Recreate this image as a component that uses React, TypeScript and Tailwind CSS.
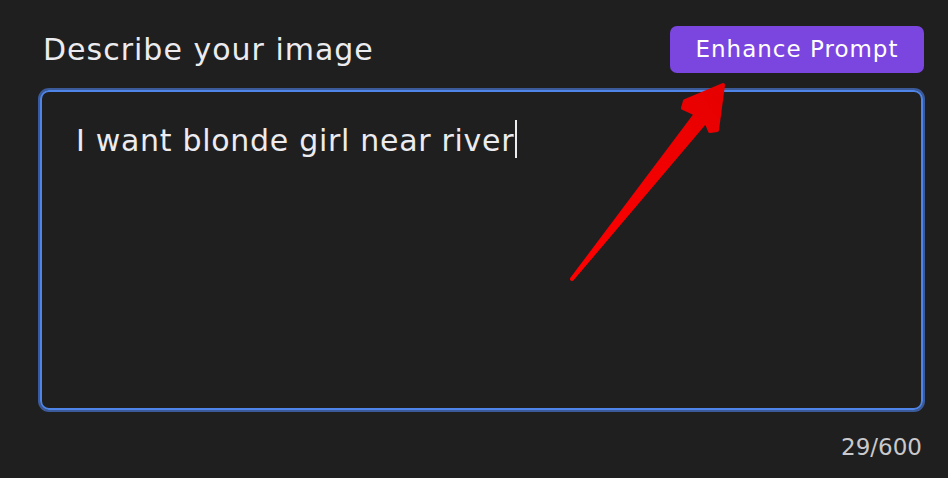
const font = { fontFamily: '"DejaVu Sans", "Open Sans", sans-serif' };

function Arrow() {
  return (
    <svg
      className="absolute left-0 top-0 pointer-events-none"
      width="948"
      height="478"
      viewBox="0 0 948 478"
    >
      <defs>
        <linearGradient id="ar" x1="0" y1="1" x2="1" y2="0">
          <stop offset="0" stopColor="#ff0000" />
          <stop offset="1" stopColor="#e60000" />
        </linearGradient>
      </defs>
      <path
        d="M572 279 L696 114 L683 108 L685 101 L723 85 L717 130 L710 131 L706 121 Z"
        fill="url(#ar)"
        stroke="url(#ar)"
        strokeWidth="4"
        strokeLinejoin="round"
      />
    </svg>
  );
}

export default function App() {
  return (
    <div
      className="relative w-[948px] h-[478px] bg-[#1f1f1f] pl-[40px] pr-[25px] pt-[26px] overflow-hidden"
      style={font}
    >
      <div className="flex items-center justify-between h-[47px]">
        <h1 className="ml-[3px] text-[30px] leading-[36px] tracking-[1px] text-[#ececf0]">Describe your image</h1>
        <button className="w-[254px] h-[47px] mr-[-1px] rounded-[7px] bg-[#7b46e0] text-white text-[23px] tracking-[1px]">
          Enhance Prompt
        </button>
      </div>
      <div className="mt-[17px] h-[320px] rounded-[9px] border-[2.5px] border-[#4f85e8] ring-2 ring-[#3a5a9a] pl-[34px] pt-[31px]">
        <p className="text-[30px] leading-[36px] tracking-[0.7px] text-[#ececf0]">
          I want blonde girl near river
          <span className="inline-block ml-[1px] w-[1.5px] h-[38px] -mt-[10px] -mb-[7px] bg-[#ececf0]" />
        </p>
      </div>
      <div className="mt-[20px] flex justify-end pr-[1px] text-[23px] text-[#c9c9cc]">29/600</div>
      <Arrow />
    </div>
  );
}
